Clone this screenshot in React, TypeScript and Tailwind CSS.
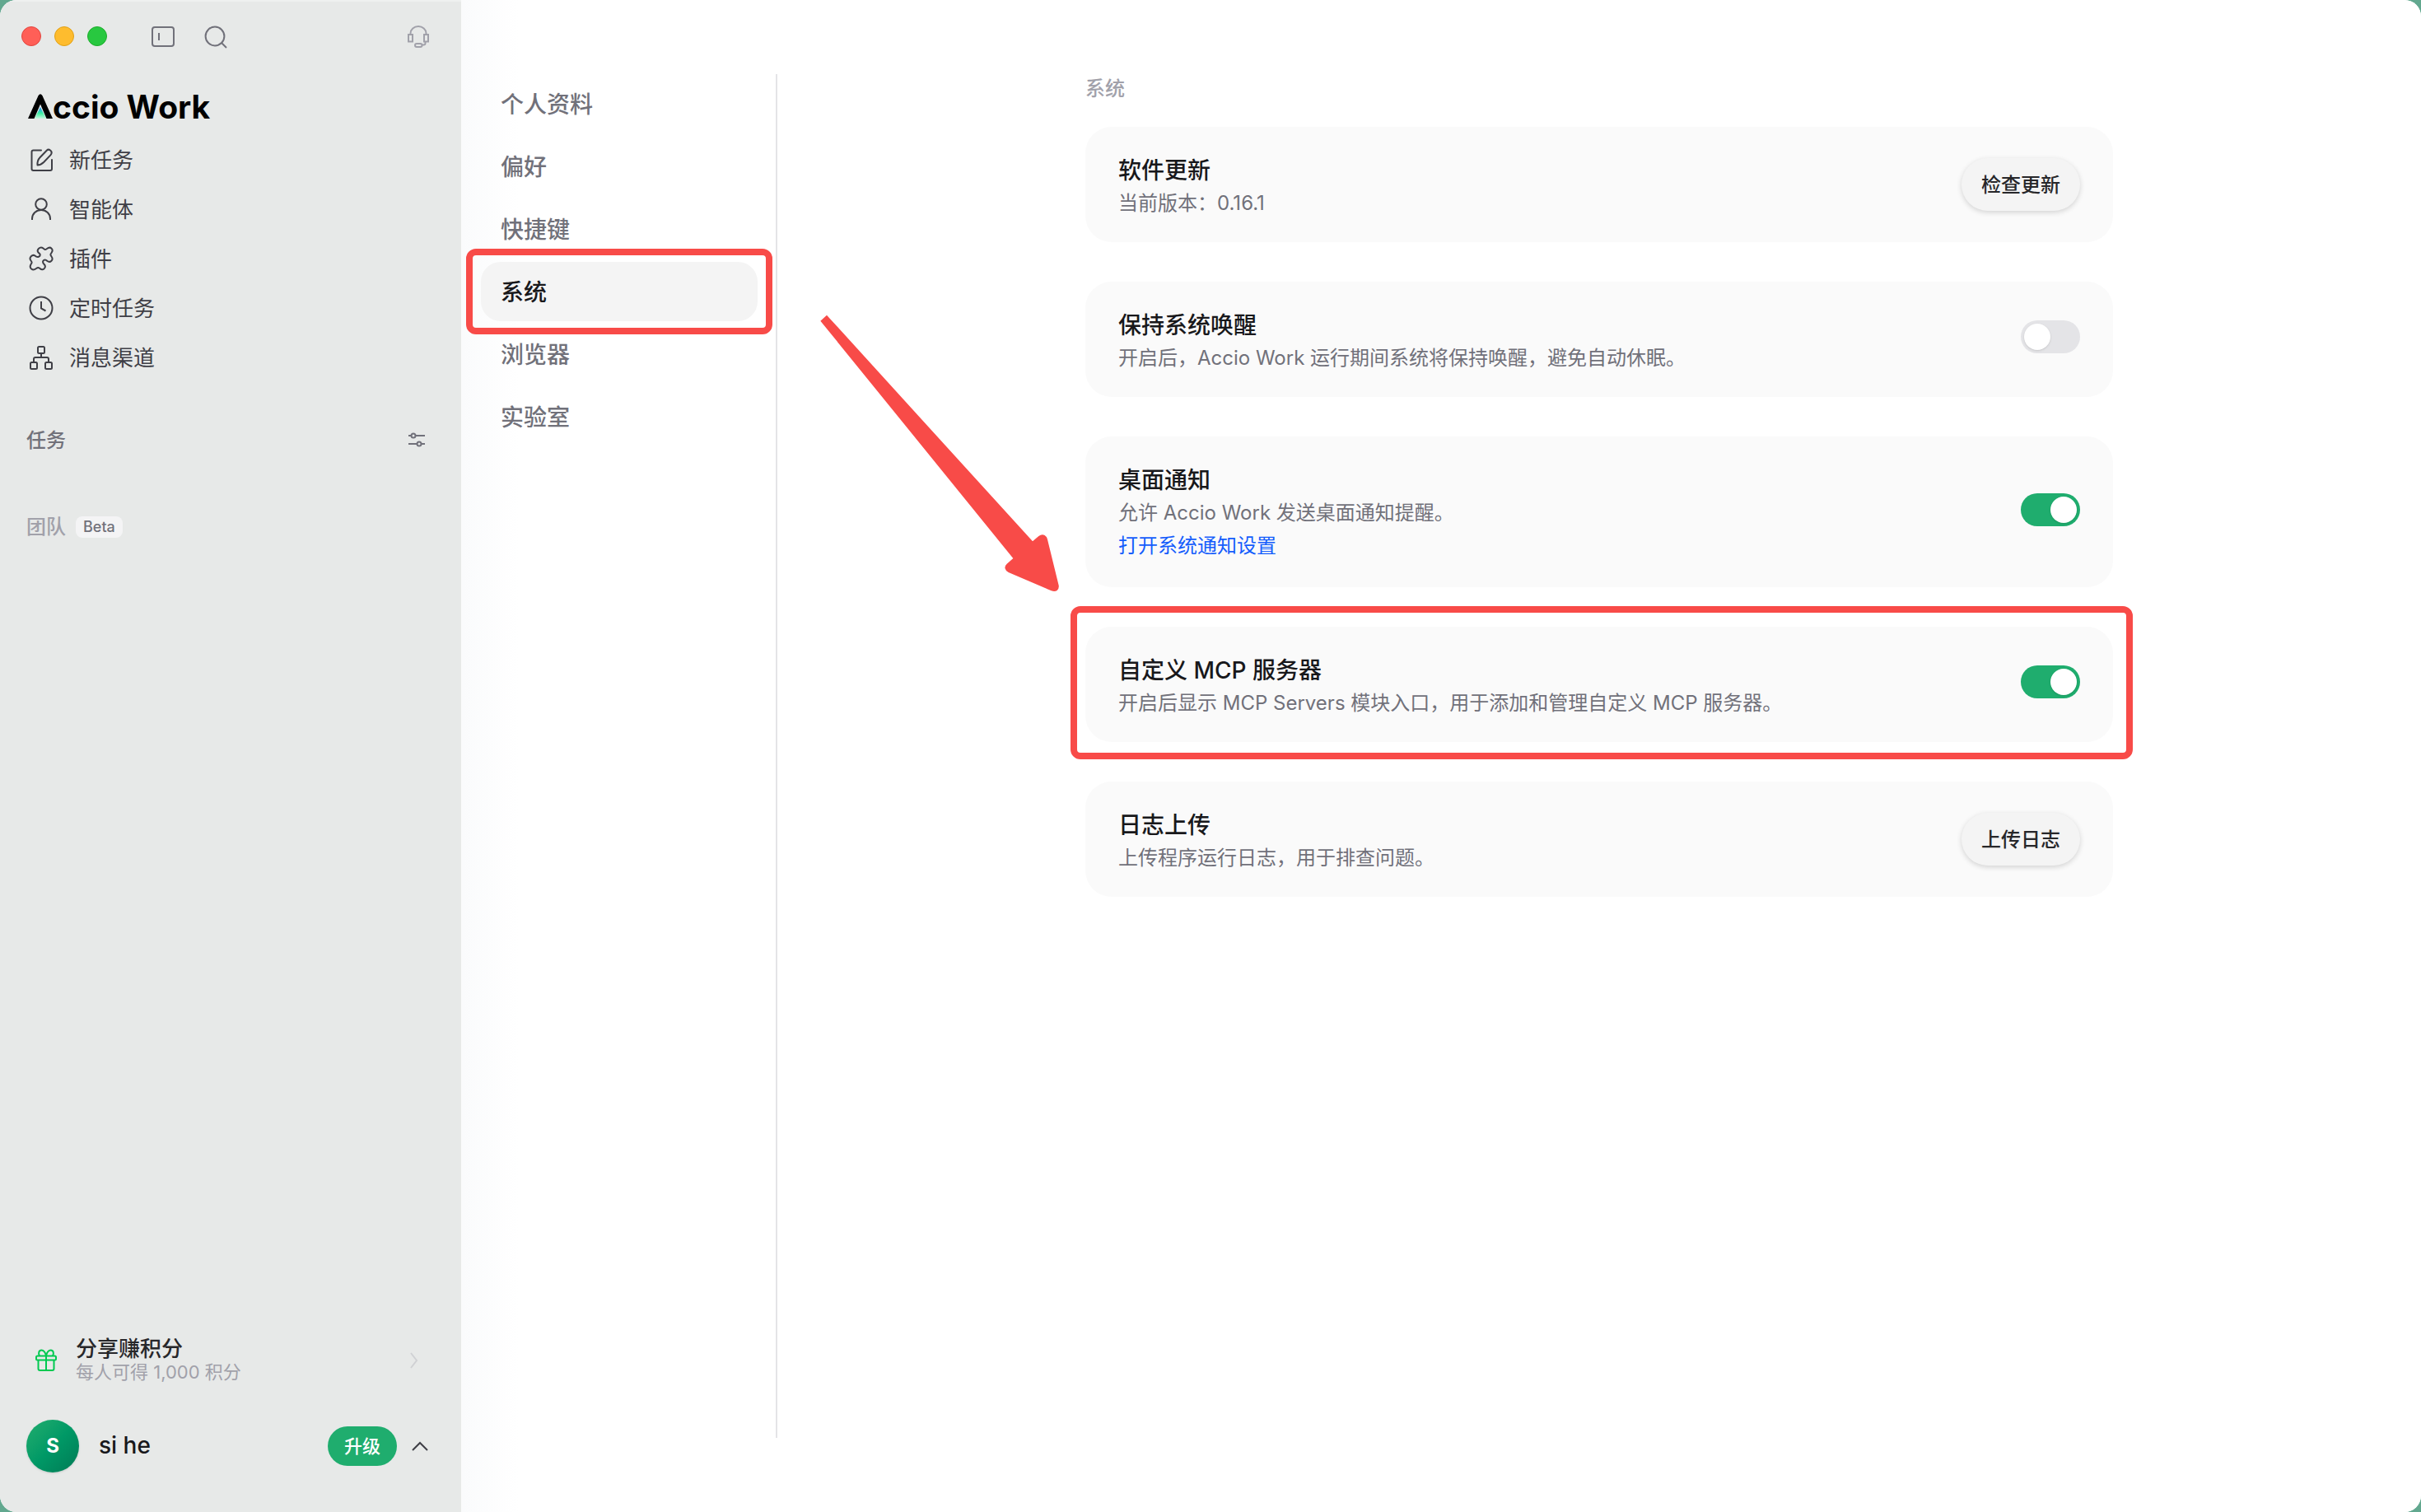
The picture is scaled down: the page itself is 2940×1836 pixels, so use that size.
import { useState, type ReactNode } from "react";

const FONT = "font-['Inter','Noto_Sans_CJK_SC',sans-serif]";

function Svg({ size, children, className = "" }: { size: number; children: ReactNode; className?: string }) {
  return (
    <svg
      width={size}
      height={size}
      viewBox={`0 0 ${size} ${size}`}
      fill="none"
      stroke="currentColor"
      strokeWidth={2}
      className={`shrink-0 ${className}`}
      aria-hidden="true"
    >
      {children}
    </svg>
  );
}

const PanelIcon = () => (
  <Svg size={32}>
    <rect x="3" y="4" width="26" height="23" rx="3" />
    <path d="M11 11v9" />
  </Svg>
);

const SearchIcon = () => (
  <Svg size={32}>
    <circle cx="15" cy="15" r="11.4" />
    <path d="M23 23l6 6" />
  </Svg>
);

const HeadsetIcon = () => (
  <Svg size={32}>
    <rect x="4" y="13" width="5" height="8.5" />
    <rect x="23" y="13" width="5" height="8.5" />
    <path d="M6.5 13v-1.5a9.5 8.5 0 0 1 19 0v1.5" />
    <path d="M24.5 21.5v2a2 2 0 0 1-2 2h-2" />
    <rect x="12" y="24" width="8.5" height="4" rx="2" />
  </Svg>
);

const EditIcon = () => (
  <Svg size={32}>
    <path d="M16 4.5H6.5a2 2 0 0 0-2 2V27a2 2 0 0 0 2 2H27a2 2 0 0 0 2-2V16" strokeLinecap="round" />
    <path d="M11.5 22.5c-.3-3.500.6-6.600 3-9.200l8.200-8.600c2.600-2.600 7.200.6 5.600 4.200-.3.600-.6 1-1 1.500l-8.200 8.600c-2 2-4.500 3.300-7.600 3.500z" strokeLinejoin="round" />
  </Svg>
);

const PersonIcon = () => (
  <Svg size={32}>
    <circle cx="16" cy="10" r="6.8" />
    <path d="M5 29v-1.5a11 10.6 0 0 1 22 0V29" />
  </Svg>
);

const PuzzleIcon = () => (
  <Svg size={32}>
    <path
      strokeLinejoin="round"
      d="M12.5 8.5C10 5.5 14.5 .5 18.5 3.5C20.5 5.5 21 5.5 23 4C27.5 .5 31.500 5 28.5 9C27 11 27 11.500 28.5 13.5C31.5 17.5 27 21.5 23.5 19C20.5 16 17 18 18.5 21.5C19.5 23.5 22 24 20.5 27C19.5 29.5 16.5 30 14.5 28C12.5 26.5 12 26.5 10 28C5.5 31.5 1 27.5 3.5 23C5 21 5 20.5 3.5 18.5C.5 14.5 5.5 10.5 8.5 12.5C11.5 15.5 15.5 13.5 14.5 10.5z"
    />
  </Svg>
);

const ClockIcon = () => (
  <Svg size={32}>
    <circle cx="16" cy="16" r="13.5" />
    <path d="M16 8v8.5l5.5 3" />
  </Svg>
);

const ChannelsIcon = () => (
  <Svg size={32}>
    <rect x="12" y="3" width="8" height="8" rx="1.5" />
    <rect x="3" y="22" width="8" height="8" rx="1.5" />
    <rect x="21" y="22" width="8" height="8" rx="1.5" />
    <path d="M16 11v5M7 22v-4a2 2 0 0 1 2-2h14a2 2 0 0 1 2 2v4" />
  </Svg>
);

const SlidersIcon = () => (
  <Svg size={24}>
    <path d="M2 7h3.5M10.5 7H22M2 17h10.5M17.5 17H22" />
    <circle cx="8" cy="7" r="2.5" />
    <circle cx="15" cy="17" r="2.5" />
  </Svg>
);

const GiftIcon = () => (
  <Svg size={32}>
    <rect x="4" y="10.5" width="24" height="5" rx="1.5" />
    <path d="M6.5 15.5V26a2 2 0 0 0 2 2h15a2 2 0 0 0 2-2V15.5M16 10.5V28" />
    <path d="M16 10.5C15 6 13 3.5 10.3 3.5c-2.8 0-4.3 3.5-2.3 7M16 10.5c1-4.5 3-7 5.7-7 2.8 0 4.3 3.5 2.3 7" />
  </Svg>
);

function Logo() {
  return (
    <h1 className="flex items-end text-[39px] leading-10 font-bold text-black" aria-label="Accio Work">
      <svg width="30" height="32" viewBox="0 0 30 32" className="mb-[5px]" aria-hidden="true">
        <defs>
          <linearGradient id="peak" x1="0" y1="0" x2="0" y2="1">
            <stop offset="0" stopColor="#1a8cff" />
            <stop offset="0.55" stopColor="#3ff0a0" />
            <stop offset="1" stopColor="#c9f7e0" />
          </linearGradient>
        </defs>
        <path d="M15 17l7 14H8z" fill="url(#peak)" />
        <path d="M0 31L12.6 3Q15 -.5 17.4 3L30 31h-7.5L15 13.5L7.5 31z" fill="#000" />
      </svg>
      <span>ccio Work</span>
    </h1>
  );
}

const NAV = [
  { label: "新任务", icon: <EditIcon /> },
  { label: "智能体", icon: <PersonIcon /> },
  { label: "插件", icon: <PuzzleIcon /> },
  { label: "定时任务", icon: <ClockIcon /> },
  { label: "消息渠道", icon: <ChannelsIcon /> },
];

function Sidebar() {
  return (
    <aside className="flex w-[560px] shrink-0 flex-col border-t-2 border-[#eff1f0] bg-[#e7e9e8] px-8 text-[#3f3f46]">
      <div className="flex h-[86px] items-center">
        <div className="-ml-[6px] flex w-[150px] gap-4 pb-[2px]">
          <button aria-label="关闭" className="size-6 rounded-full border border-[#e2463f] bg-[#ff5f57]" />
          <button aria-label="最小化" className="size-6 rounded-full border border-[#e1a116] bg-[#febc2e]" />
          <button aria-label="全屏" className="size-6 rounded-full border border-[#1dad2b] bg-[#28c840]" />
        </div>
        <div className="flex grow items-center gap-8 pl-[6px] text-[#71717a]">
          <button aria-label="折叠侧栏"><PanelIcon /></button>
          <button aria-label="搜索"><SearchIcon /></button>
          <button aria-label="客服" className="mr-1 ml-auto text-[#a1a1aa]"><HeadsetIcon /></button>
        </div>
      </div>

      <div className="pt-[22px] pb-[14px] pl-[2px]"><Logo /></div>

      <nav className="flex flex-col">
        {NAV.map((n) => (
          <a key={n.label} href="#" className="flex h-15 items-center gap-[18px] pl-[2px] text-[26px]">
            {n.icon}
            <span>{n.label}</span>
          </a>
        ))}
      </nav>

      <div className="mt-10 flex h-15 items-center justify-between pr-[10px] text-2xl font-medium text-[#71717a]">
        <h2 className="pt-[2px]">任务</h2>
        <button aria-label="筛选任务"><SlidersIcon /></button>
      </div>
      <div className="mt-[46px] flex h-15 items-center gap-3 text-2xl text-[#a1a1aa]">
        <h2 className="font-medium">团队</h2>
        <span className="rounded-lg bg-[#f4f4f5] px-[9px] text-lg leading-[26px] font-medium text-[#71717a]">Beta</span>
      </div>

      <a href="#" className="mt-auto flex h-20 items-center pr-4 pl-2">
        <span className="text-[#00c950]"><GiftIcon /></span>
        <span className="ml-5 grow">
          <span className="block text-[26px] leading-7 font-medium text-[#27272a]">分享赚积分</span>
          <span className="block text-[22px] leading-7 text-[#a1a1aa]">每人可得 1,000 积分</span>
        </span>
        <Svg size={20} className="text-[#d0d1d4]"><path d="M7 1l7 9-7 9" /></Svg>
      </a>
      <div className="mt-6 flex h-[120px] items-center pr-[6px] pb-10">
        <span className="flex size-16 items-center justify-center rounded-full bg-linear-to-br from-[#1fae6e] via-[#009966] to-[#007a55] text-2xl font-bold text-white shadow-sm">S</span>
        <span className="ml-6 grow pb-[2px] text-[28px] font-medium text-[#18181b]">si he</span>
        <button className="h-12 w-[84px] rounded-full bg-[#1fad6e] text-[22px] font-medium text-white">升级</button>
        <button aria-label="账户菜单" className="ml-4">
          <Svg size={24}><path d="M3 17l9-9 9 9" /></Svg>
        </button>
      </div>
    </aside>
  );
}

const TABS = ["个人资料", "偏好", "快捷键", "系统", "浏览器", "实验室"];

function SettingsNav() {
  return (
    <nav className="my-[90px] flex w-[384px] shrink-0 flex-col gap-1 border-r-2 border-[#e4e4e7] pr-[22px] pl-6">
      {TABS.map((t) => {
        const active = t === "系统";
        return (
          <a
            key={t}
            href="#"
            aria-current={active ? "page" : undefined}
            className={`relative flex h-18 items-center rounded-3xl px-6 pt-[2px] text-[28px] font-medium ${active ? "bg-[#f4f4f4] text-[#18181b]" : "text-[#71717a]"}`}
          >
            {t}
            {active && <Highlight className="-inset-y-4 -right-[18px] -left-[18px]" />}
          </a>
        );
      })}
    </nav>
  );
}

function Highlight({ className }: { className: string }) {
  return <span aria-hidden="true" className={`pointer-events-none absolute rounded-xl border-8 border-[#f84b48] ${className}`} />;
}

type CardProps = { title: string; desc: string; link?: string; children: ReactNode; highlight?: boolean };

function Card({ title, desc, link, children, highlight }: CardProps) {
  return (
    <section className="relative flex items-center justify-between rounded-[32px] bg-[#fafafa] px-10 py-[29px]">
      <div className="pt-[6px]">
        <h3 className="text-[28px] leading-9 font-medium text-[#18181b]">{title}</h3>
        <p className="mt-1 text-2xl leading-9 text-[#71717a]">{desc}</p>
        {link && <a href="#" className="block text-2xl leading-[43px] text-[#155dfc]">{link}</a>}
      </div>
      {children}
      {highlight && <Highlight className="-top-[25px] -right-6 -bottom-[21px] -left-[18px]" />}
    </section>
  );
}

function Toggle({ label, initial }: { label: string; initial: boolean }) {
  const [on, setOn] = useState(initial);
  return (
    <label className="block cursor-pointer pb-[6px]">
      <input type="checkbox" role="switch" aria-label={label} checked={on} onChange={() => setOn(!on)} className="peer sr-only" />
      <span className="flex h-10 w-18 rounded-full bg-[#e4e4e7] p-1 peer-checked:justify-end peer-checked:bg-[#1fad6e]">
        <span className="size-8 rounded-full bg-white shadow-sm" />
      </span>
    </label>
  );
}

function PillButton({ children }: { children: ReactNode }) {
  return (
    <button className="h-16 w-36 shrink-0 rounded-full bg-[#f4f4f4] pt-[2px] text-2xl font-medium text-[#27272a] shadow-[0_2px_6px_rgba(0,0,0,0.16)]">
      {children}
    </button>
  );
}

function Arrow() {
  return (
    <svg
      width="340"
      height="380"
      viewBox="0 0 1020 1140"
      className="pointer-events-none absolute top-[360px] left-[980px]"
      aria-hidden="true"
    >
      <path
        fill="#f84b48"
        d="M49 89L72 68L822 892L844 873Q855 865 866 870Q874 874 876 885L917 1052Q919 1064 911 1071Q903 1076 890 1072L734 1005Q724 1000 721 989Q722 979 728 974L751 954Z"
      />
    </svg>
  );
}

export default function App() {
  return (
    <div className={`min-h-screen bg-[#62a88f] ${FONT}`}>
      <div className="relative flex min-h-screen overflow-hidden rounded-[20px] bg-white">
        <Sidebar />
        <div className="flex grow bg-linear-to-r from-[#fafbfc] to-white to-[70px]">
          <SettingsNav />
          <main className="grow px-6 pt-[90px]">
            <div className="mx-auto flex w-full max-w-[1248px] flex-col">
              <h2 className="pb-7 text-2xl leading-9 font-medium text-[#a1a1aa]">系统</h2>
              <div className="flex flex-col gap-12">
                <Card title="软件更新" desc="当前版本：0.16.1">
                  <PillButton>检查更新</PillButton>
                </Card>
                <Card title="保持系统唤醒" desc="开启后，Accio Work 运行期间系统将保持唤醒，避免自动休眠。">
                  <Toggle label="保持系统唤醒" initial={false} />
                </Card>
                <Card title="桌面通知" desc="允许 Accio Work 发送桌面通知提醒。" link="打开系统通知设置">
                  <Toggle label="桌面通知" initial={true} />
                </Card>
                <Card title="自定义 MCP 服务器" desc="开启后显示 MCP Servers 模块入口，用于添加和管理自定义 MCP 服务器。" highlight>
                  <Toggle label="自定义 MCP 服务器" initial={true} />
                </Card>
                <Card title="日志上传" desc="上传程序运行日志，用于排查问题。">
                  <PillButton>上传日志</PillButton>
                </Card>
              </div>
            </div>
          </main>
        </div>
        <Arrow />
      </div>
    </div>
  );
}
